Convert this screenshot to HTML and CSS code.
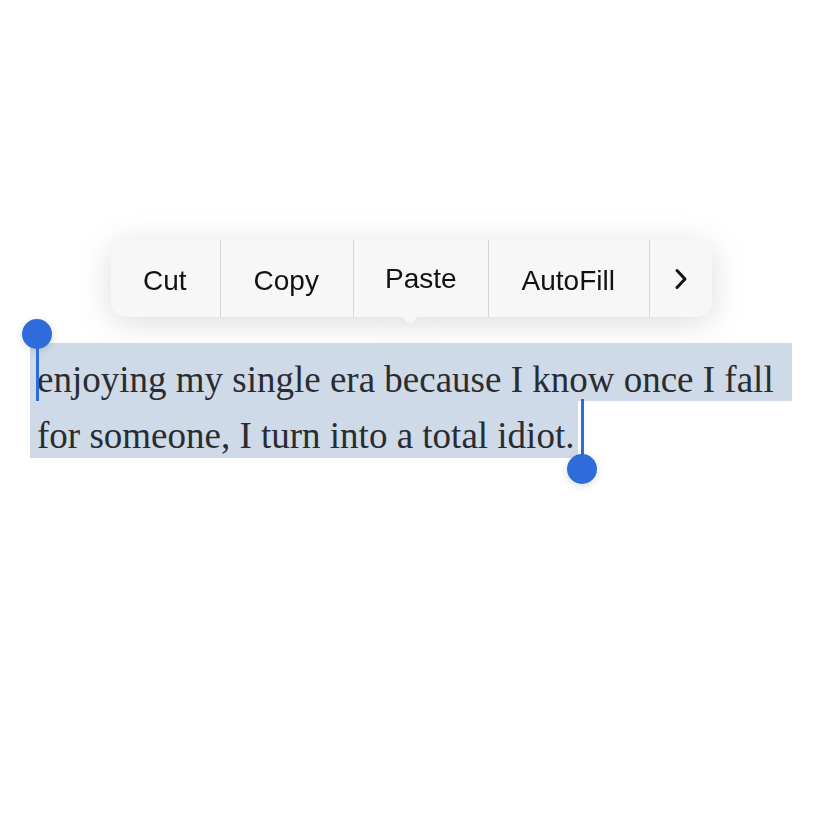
FILE: index.html
```html
<!DOCTYPE html>
<html lang="en">
<head>
<meta charset="utf-8">
<title>Text selection</title>
<link rel="stylesheet" href="styles.css">
</head>
<body>
<div class="page">
  <div class="menu-wrap">
    <div class="menu">
      <div class="item cut">Cut</div>
      <div class="item copy">Copy</div>
      <div class="item paste">Paste</div>
      <div class="item autofill">AutoFill</div>
      <div class="item more">
        <svg class="chev" width="14" height="22" viewBox="0 0 14 22"><path d="M3 2.5 L11 11 L3 19.5" fill="none" stroke="#111" stroke-width="3" stroke-linecap="round" stroke-linejoin="round"/></svg>
      </div>
    </div>
  </div>
  <div class="selection">
    <div class="line full">enjoying my single era because I know once I fall</div>
    <div class="line part">for someone, I turn into a total idiot.</div>
    <div class="handle start"><span class="knob"></span><span class="stem"></span></div>
    <div class="handle end"><span class="stem"></span><span class="knob"></span></div>
  </div>
</div>
</body>
</html>
```
FILE: styles.css
```css
html, body {
  margin: 0;
  padding: 0;
  background: #ffffff;
}
.page {
  width: 828px;
  height: 828px;
  padding-top: 240px;
  box-sizing: border-box;
}
.menu-wrap {
  margin-left: 111px;
  width: max-content;
  position: relative;
  filter: drop-shadow(0 5px 16px rgba(0, 0, 0, 0.14));
}
.menu-wrap::after {
  content: "";
  position: absolute;
  left: 290px;
  top: 63px;
  width: 18px;
  height: 18px;
  background: #f7f7f7;
  transform: rotate(45deg);
  border-bottom-right-radius: 4px;
}
.menu {
  display: flex;
  height: 77px;
  background: #f7f7f7;
  border-radius: 15px;
  overflow: hidden;
  position: relative;
  z-index: 1;
}
.item {
  font-family: "Liberation Sans", Arial, sans-serif;
  font-size: 28px;
  color: #111;
  line-height: 77px;
  padding: 2px 33px 0;
  box-sizing: border-box;
  height: 77px;
  border-right: 1px solid #d6d6d6;
}
.item.cut {
  padding-left: 32px;
  padding-right: 33px;
}
.item.copy {
  padding-left: 33px;
  padding-right: 34px;
}
.item.paste {
  padding: 0 31px;
}
.item.autofill {
  padding-left: 33px;
  padding-right: 34px;
}
.item.more {
  border-right: none;
  width: 62px;
  padding: 0;
  display: flex;
  align-items: center;
  justify-content: center;
}
.chev {
  display: block;
}
.selection {
  position: relative;
  margin-top: 26px;
  margin-left: 30px;
  width: 762px;
  font-family: "Liberation Serif", "Times New Roman", serif;
  font-size: 37px;
  color: #2a2c30;
}
.line {
  background: #cedae8;
  box-sizing: border-box;
  padding-left: 7px;
  padding-top: 16px;
  line-height: 41px;
  white-space: nowrap;
}
.line.full {
  height: 58px;
}
.line.part {
  width: max-content;
  height: 57px;
  padding-top: 14px;
  padding-right: 4px;
}
.handle {
  position: absolute;
  width: 30px;
  display: flex;
  flex-direction: column;
  align-items: center;
}
.handle.start {
  left: -8px;
  top: -24px;
}
.handle.end {
  left: 537px;
  top: 56px;
}
.knob {
  width: 30px;
  height: 30px;
  border-radius: 50%;
  background: #2f6bdb;
  box-shadow: 0 2px 8px rgba(0, 0, 0, 0.14);
}
.stem {
  width: 3px;
  background: #2f6bdb;
}
.handle.start .stem {
  height: 53px;
  margin-top: -1px;
}
.handle.end .stem {
  height: 56px;
  margin-bottom: -1px;
}
```
